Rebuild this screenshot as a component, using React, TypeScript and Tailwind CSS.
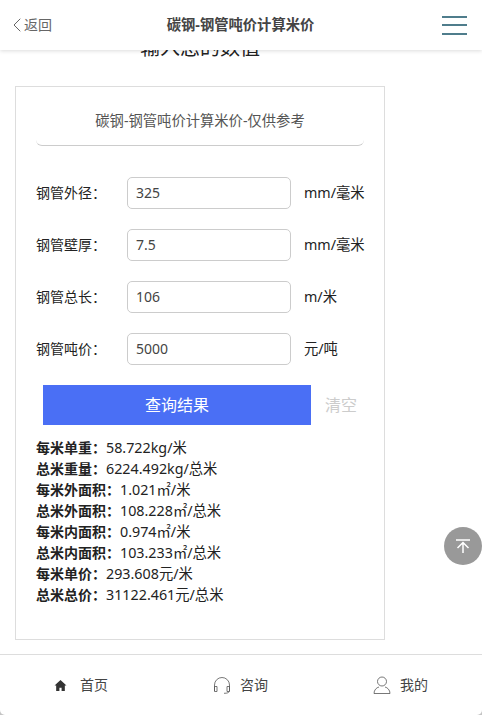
import React from "react";
import { ChevronLeft } from "lucide-react";

const fields = [
  { label: "钢管外径：", value: "325", unit: "mm/毫米" },
  { label: "钢管壁厚：", value: "7.5", unit: "mm/毫米" },
  { label: "钢管总长：", value: "106", unit: "m/米" },
  { label: "钢管吨价：", value: "5000", unit: "元/吨" },
];

const results = [
  { label: "每米单重：", value: "58.722kg/米" },
  { label: "总米重量：", value: "6224.492kg/总米" },
  { label: "每米外面积：", value: "1.021㎡/米" },
  { label: "总米外面积：", value: "108.228㎡/总米" },
  { label: "每米内面积：", value: "0.974㎡/米" },
  { label: "总米内面积：", value: "103.233㎡/总米" },
  { label: "每米单价：", value: "293.608元/米" },
  { label: "总米总价：", value: "31122.461元/总米" },
];

const App: React.FC = () => {
  return (
    <div className="relative h-[715px] w-[482px] overflow-hidden bg-[#c4c4c4] font-['Noto_Sans','Noto_Sans_CJK_SC',sans-serif] text-[#222]">
      <div className="flex h-full flex-col overflow-hidden rounded-b-[5px] bg-white">
        {/* Header */}
        <header className="relative z-10 flex h-[50px] shrink-0 items-center bg-white pl-[11px] pr-[15px] shadow-[0_1px_4px_rgba(0,0,0,0.14)]">
          <div className="flex flex-1 items-center text-sm text-[#666]">
            <ChevronLeft className="-ml-[6px] -mr-[5px] h-[24px] w-[24px] shrink-0" strokeWidth={1} />
            <span>返回</span>
          </div>
          <h1 className="ml-[3px] text-[14.3px] font-bold text-[#444]">碳钢-钢管吨价计算米价</h1>
          <div className="flex flex-1 justify-end">
            <div className="flex w-[25px] flex-col gap-[6.5px]">
              <span className="h-[2px] bg-[#4f7d8c]" />
              <span className="h-[2px] bg-[#4f7d8c]" />
              <span className="h-[2px] bg-[#4f7d8c]" />
            </div>
          </div>
        </header>

        {/* Main */}
        <main className="flex-1 pl-[15px]">
          <div className="-mt-[16px] w-[370px] text-center text-[20px] leading-[28px]">
            输入您的数值
          </div>
          <section className="mt-[24px] h-[554px] w-[370px] border border-[#ddd] px-[20px]">
            <div className="flex h-[59px] items-center justify-center rounded-b-[6px] border-b border-[#ccc] pt-[10px] text-[14.3px] text-[#555]">
              碳钢-钢管吨价计算米价-仅供参考
            </div>

            <div className="mt-[31px] flex flex-col gap-[20px]">
              {fields.map((field) => (
                <div key={field.label} className="flex items-center text-sm">
                  <span className="w-[91px] shrink-0">{field.label}</span>
                  <div className="flex h-[32px] w-[164px] shrink-0 items-center rounded-[5px] border border-[#ccc] pl-[8px] text-[#444]">
                    {field.value}
                  </div>
                  <span className="ml-[13px] whitespace-nowrap text-[14.3px]">{field.unit}</span>
                </div>
              ))}
            </div>

            <div className="mt-[20px] flex items-center pl-[7px]">
              <button className="h-[40px] w-[268px] bg-[#4a6ff5] text-base text-white">查询结果</button>
              <span className="ml-[14px] text-base text-[#ccc]">清空</span>
            </div>

            <div className="mt-[12px] text-sm leading-[21px]">
              {results.map((row) => (
                <div key={row.label}>
                  <span className="font-bold">{row.label}</span>
                  <span className="text-[14.3px]">{row.value}</span>
                </div>
              ))}
            </div>
          </section>
        </main>

        {/* Bottom nav */}
        <nav className="flex h-[61px] shrink-0 items-center border-t border-[#ddd] text-sm text-[#444]">
          <div className="ml-[54px] flex items-center gap-[13px]">
            <svg viewBox="0 0 24 24" className="h-[13px] w-[13px] fill-[#333]">
              <path d="M12 2 1 12h3v10h6v-6h4v6h6V12h3z" />
            </svg>
            <span>首页</span>
          </div>
          <div className="ml-[105px] flex items-center gap-[9px]">
            <svg viewBox="0 0 18 18" className="h-[18px] w-[18px] fill-none stroke-[#555]" strokeWidth="0.8">
              <path d="M1.5 15V9a7.500 7.500 0 0 1 15 0v6" />
              <path d="M1.500 10.500h2.500v5h-2.500zM14 10.500h2.500v5H14z" />
              <path d="M16 15.500c0 1-1.500 1.800-5 1.800" />
            </svg>
            <span>咨询</span>
          </div>
          <div className="ml-[105px] flex items-center gap-[9px]">
            <svg viewBox="0 0 18 18" className="h-[18px] w-[18px] fill-none stroke-[#555]" strokeWidth="0.8">
              <circle cx="9" cy="5.500" r="4.500" />
              <path d="M1 17.500c0-3.500 2.500-6 5-6.500M17 17.500c0-3.500-2.500-6-5-6.500M1 17.500h16" />
            </svg>
            <span>我的</span>
          </div>
        </nav>
      </div>

      {/* Back to top */}
      <div className="absolute left-[444px] top-[527px] flex h-[38px] w-[38px] items-center justify-center rounded-full bg-[#999]">
        <svg viewBox="0 0 16 16" className="h-[16px] w-[16px] fill-none stroke-white" strokeWidth="1.500">
          <path d="M1 2h14M8 15V5M2.500 10 8 4.500l5.500 5.500" />
        </svg>
      </div>
    </div>
  );
};

export default App;
